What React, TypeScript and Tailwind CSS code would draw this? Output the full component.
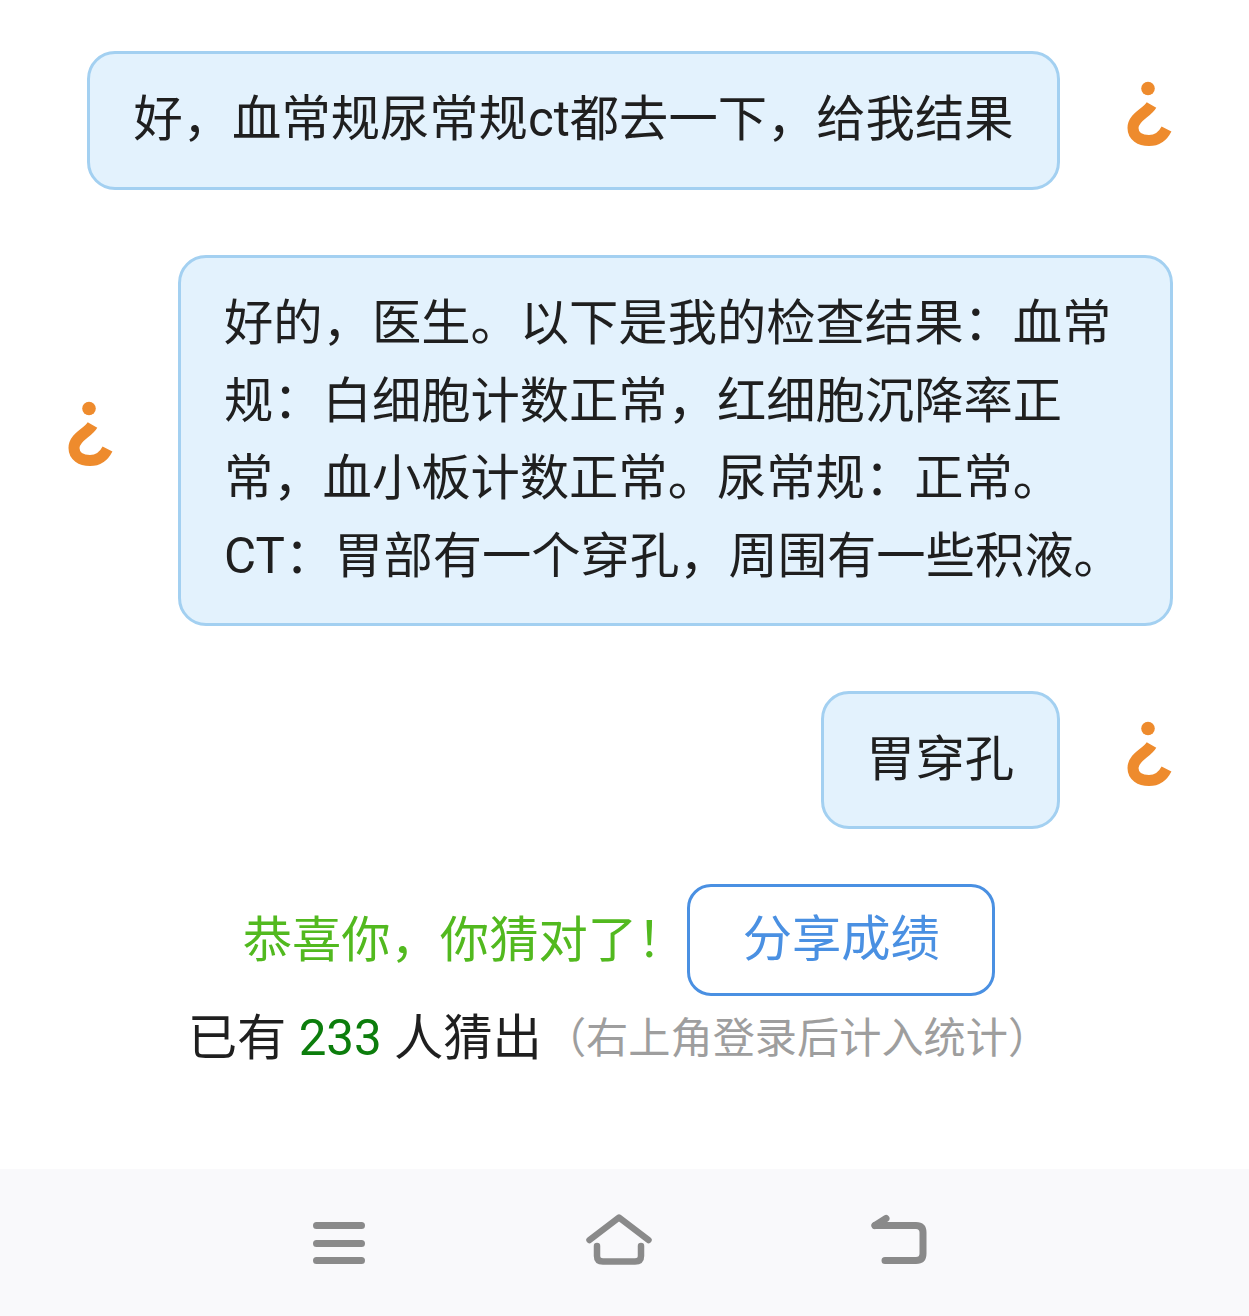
const fontStack = { fontFamily: 'Roboto, "Noto Sans CJK SC", sans-serif' };

function Hook() {
  return (
    <svg width="46" height="78" viewBox="0 0 46 78" className="shrink-0">
      <circle cx="22" cy="7.5" r="6.8" fill="#ee8b2d" />
      <path
        d="M25.5 24 C21 32 7 36 7 47 C7 55 14 59.5 23 59.5 C32 59.5 37 55 40.5 48"
        fill="none"
        stroke="#ee8b2d"
        strokeWidth="11"
      />
    </svg>
  );
}

const bubble =
  "bg-[#e3f2fd] border-[3px] border-[#a3d0f1] rounded-[28px] text-[49.3px] leading-[77.5px] text-[#1f1f1f]";

export default function App() {
  return (
    <div className="h-[1316px] w-[1249px] bg-white flex flex-col" style={fontStack}>
      <main className="flex-1 pt-[51px] flex flex-col">
        <div className="flex justify-end items-center gap-[66px] pr-[77px]">
          <div className={`${bubble} px-[43.5px] pt-[27px] pb-[28px] whitespace-nowrap`}>好，血常规尿常规ct都去一下，给我结果</div>
          <Hook />
        </div>
        <div className="flex items-center gap-[65px] pl-[67px] mt-[65px]">
          <Hook />
          <div className={`${bubble} w-[995px] pl-[43px] pr-[35px] py-[27.5px]`}>
            好的，医生。以下是我的检查结果：血常规：白细胞计数正常，红细胞沉降率正常，血小板计数正常。尿常规：正常。CT：胃部有一个穿孔，周围有一些积液。
          </div>
        </div>
        <div className="flex justify-end items-center gap-[66px] pr-[77px] mt-[65px]">
          <div className={`${bubble} pl-[42px] pr-[43px] py-[27.5px] whitespace-nowrap`}>胃穿孔</div>
          <Hook />
        </div>
        <div className="flex items-center justify-center mt-[55px] pr-[11px]">
          <span className="text-[49.3px] leading-[77px] text-[#52b91f] whitespace-nowrap">恭喜你，你猜对了！</span>
          <button className="ml-[1px] w-[308px] h-[112px] rounded-[24px] border-[3px] border-[#4a90e2] bg-white text-[49.3px] text-[#4a90e2]">
            分享成绩
          </button>
        </div>
        <div className="flex items-center justify-center mt-[4px] pr-[11px] leading-[77px] whitespace-nowrap">
          <span className="text-[49.3px] text-[#1f1f1f]">
            已有 <span className="text-[#0c7d0c]">233</span> 人猜出
          </span>
          <span className="text-[42.2px] text-[#9e9e9e] ml-[2px]">（右上角登录后计入统计）</span>
        </div>
      </main>
      <nav className="h-[147px] bg-[#f9f9fb] flex justify-center pt-[43px] pr-[11px]">
        <div className="w-[280px] flex justify-center">
          <svg width="52" height="56" viewBox="0 0 52 56" fill="none" stroke="#8a8a8a" strokeWidth="7" strokeLinecap="round">
            <path d="M3.5 13.5 H48.5 M3.5 31.5 H48.5 M3.5 48.5 H48.5" />
          </svg>
        </div>
        <div className="w-[280px] flex justify-center">
          <svg width="68" height="56" viewBox="0 0 68 56" fill="none" stroke="#8a8a8a" strokeWidth="6.5" strokeLinecap="round" strokeLinejoin="round">
            <path d="M4.5 28 L34 5.5 L63.5 28" />
            <path d="M12 34 V44 Q12 49.5 18 49.5 H50 Q56 49.5 56 44 V34" />
          </svg>
        </div>
        <div className="w-[280px] flex justify-center">
          <svg width="56" height="56" viewBox="0 0 56 56" fill="none" stroke="#8a8a8a" strokeWidth="7" strokeLinecap="round" strokeLinejoin="round">
            <path d="M4 13.5 H45 Q52 13.5 52 20.5 V41.5 Q52 48.5 45 48.5 H14" />
            <path d="M4 13.5 L15 6.5" />
          </svg>
        </div>
      </nav>
    </div>
  );
}
